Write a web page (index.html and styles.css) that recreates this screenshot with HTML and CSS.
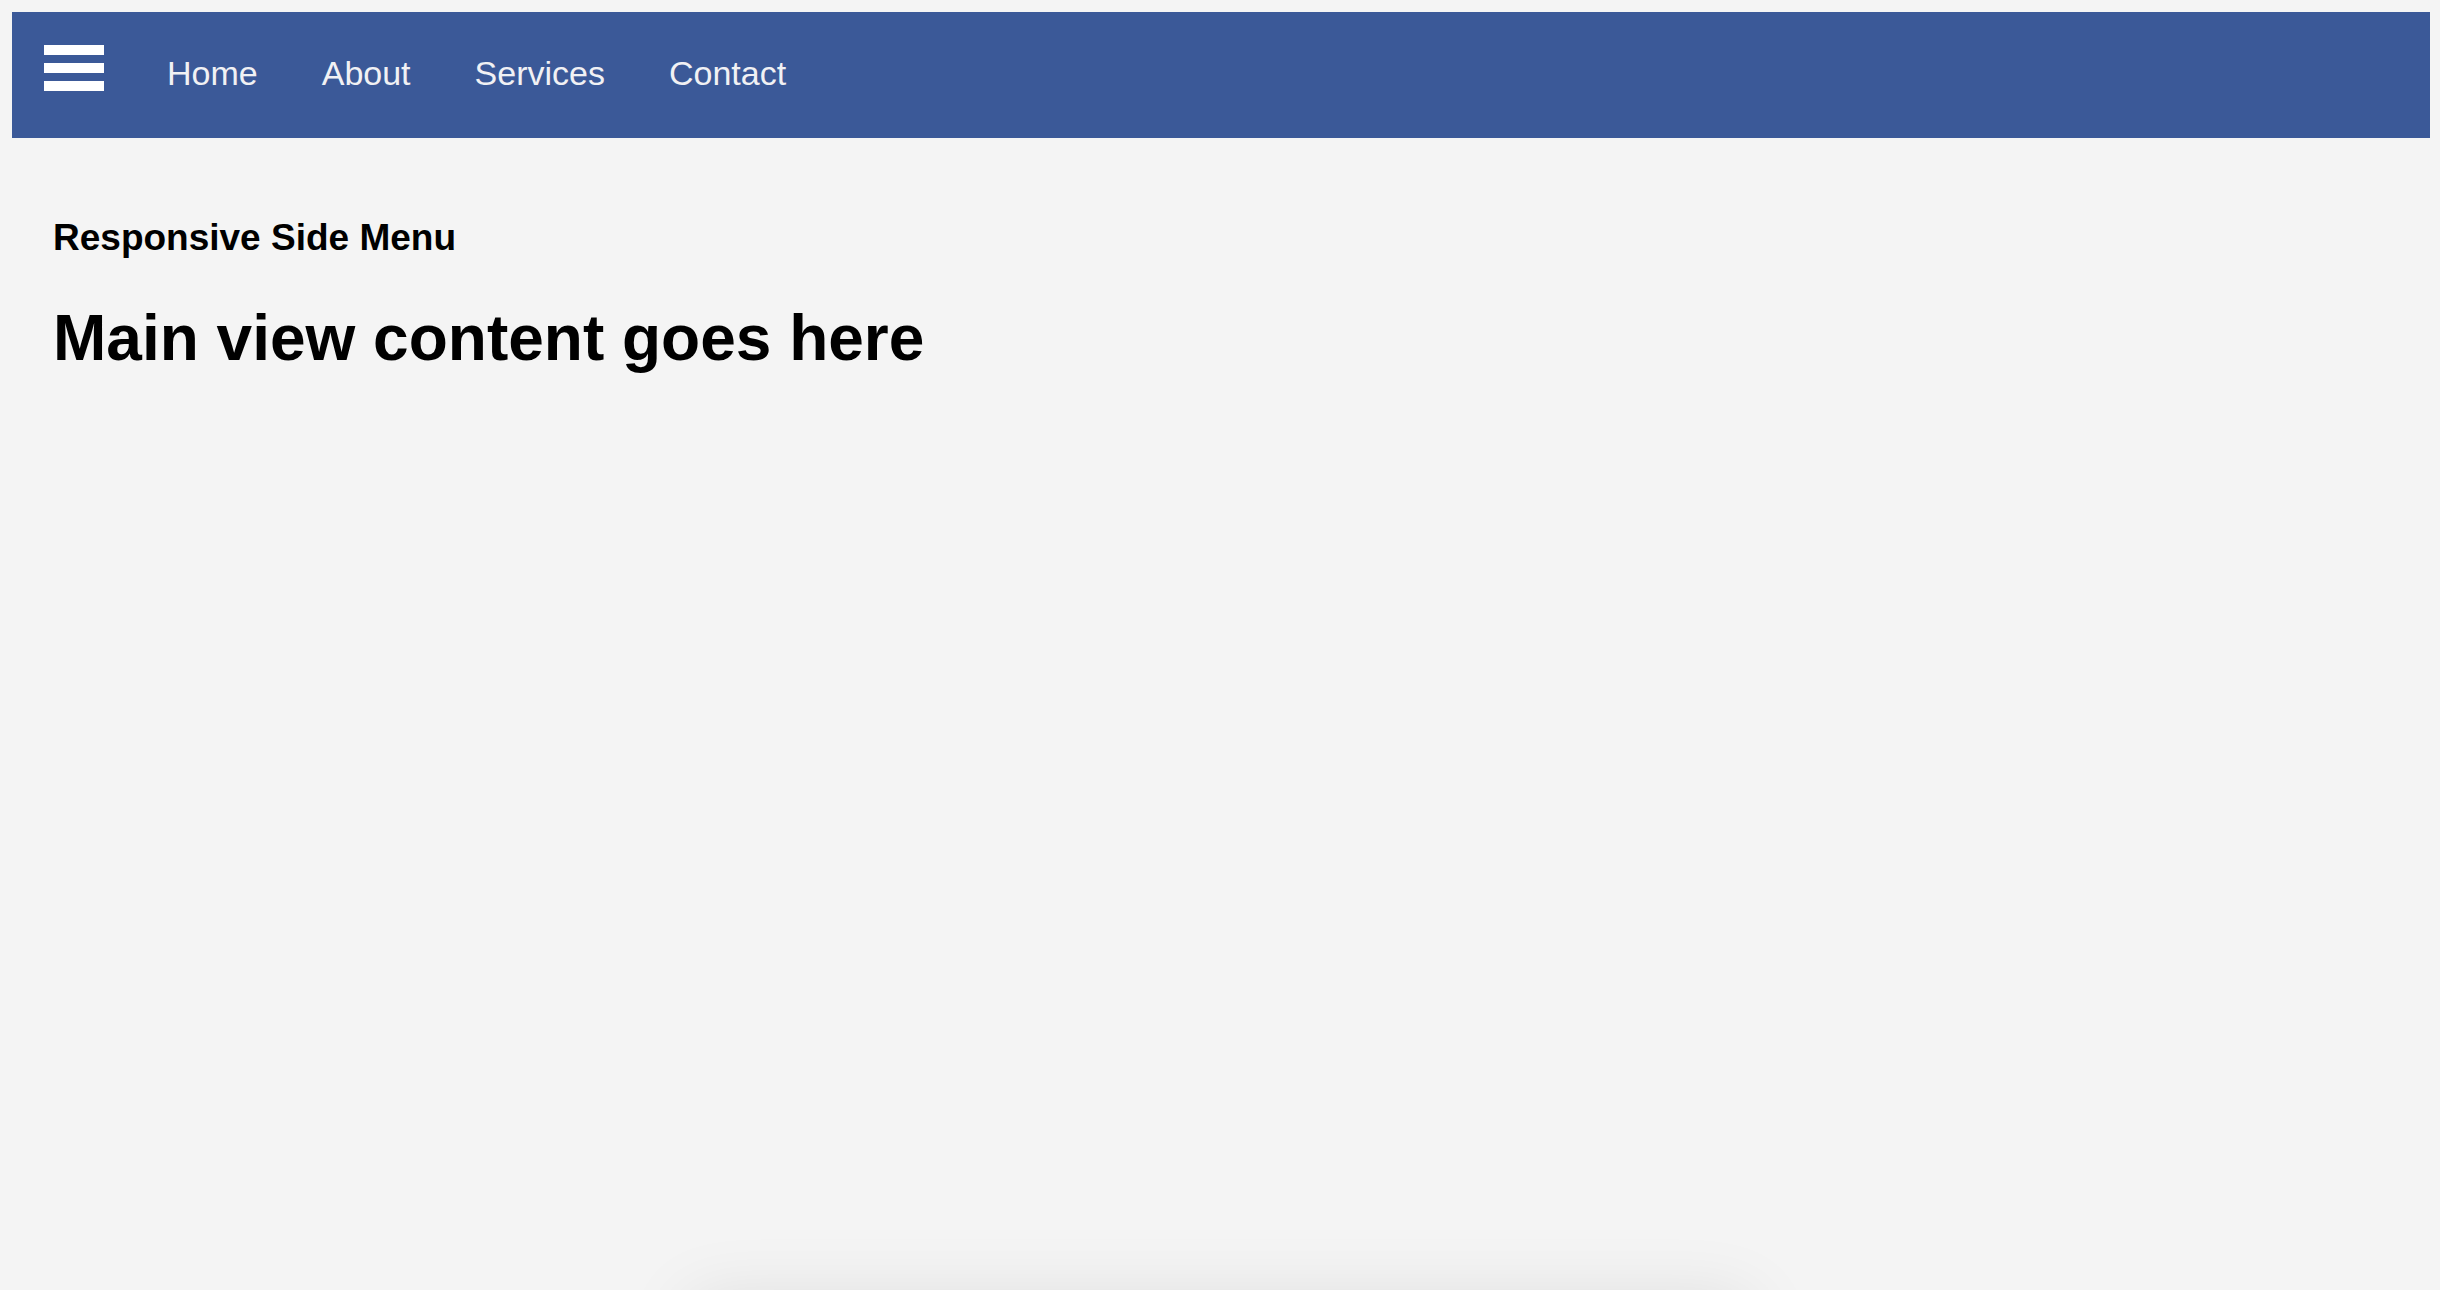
FILE: index.html
```html
<!DOCTYPE html>
<html lang="en">
<head>
<meta charset="utf-8">
<title>Responsive Side Menu</title>
<link rel="stylesheet" href="styles.css">
</head>
<body>
<nav class="topbar">
  <button class="burger" aria-label="Menu">
    <span class="bar"></span>
    <span class="bar"></span>
    <span class="bar"></span>
  </button>
  <ul class="links">
    <li><a href="#">Home</a></li>
    <li><a href="#">About</a></li>
    <li><a href="#">Services</a></li>
    <li><a href="#">Contact</a></li>
  </ul>
</nav>
<main class="content">
  <h2 class="subtitle">Responsive Side Menu</h2>
  <h1 class="title">Main view content goes here</h1>
</main>
<div class="drawer"></div>
</body>
</html>
```
FILE: styles.css
```css
html, body {
  height: 100%;
}
body {
  margin: 12px 10px 0 12px;
  background: #f4f4f4;
  font-family: "Liberation Sans", Arial, sans-serif;
  color: #000;
  overflow: hidden;
}
.topbar {
  display: flex;
  align-items: flex-start;
  height: 126px;
  padding: 0 0 0 32px;
  background: #3b5998;
  box-sizing: border-box;
}
.burger {
  display: flex;
  flex-direction: column;
  gap: 8px;
  margin: 33px 0 0 0;
  padding: 0;
  width: 60px;
  border: 0;
  background: transparent;
}
.bar {
  display: block;
  width: 60px;
  height: 10px;
  background: #fff;
}
.links {
  display: flex;
  gap: 64px;
  list-style: none;
  margin: 41px 0 0 63px;
  padding: 0;
}
.links a {
  display: block;
  font-size: 34px;
  line-height: 40px;
  color: #f1f1f4;
  text-decoration: none;
}
.content {
  padding: 78px 41px;
}
.subtitle {
  margin: 0 0 41px;
  font-size: 37px;
  line-height: 44px;
  font-weight: bold;
}
.title {
  margin: 0;
  font-size: 64px;
  line-height: 74px;
  font-weight: bold;
}
.drawer {
  position: fixed;
  left: 690px;
  width: 1060px;
  top: 1300px;
  height: 200px;
  background: #f4f4f4;
  box-shadow: 0 0 70px rgba(0, 0, 0, 0.1);
}
```
